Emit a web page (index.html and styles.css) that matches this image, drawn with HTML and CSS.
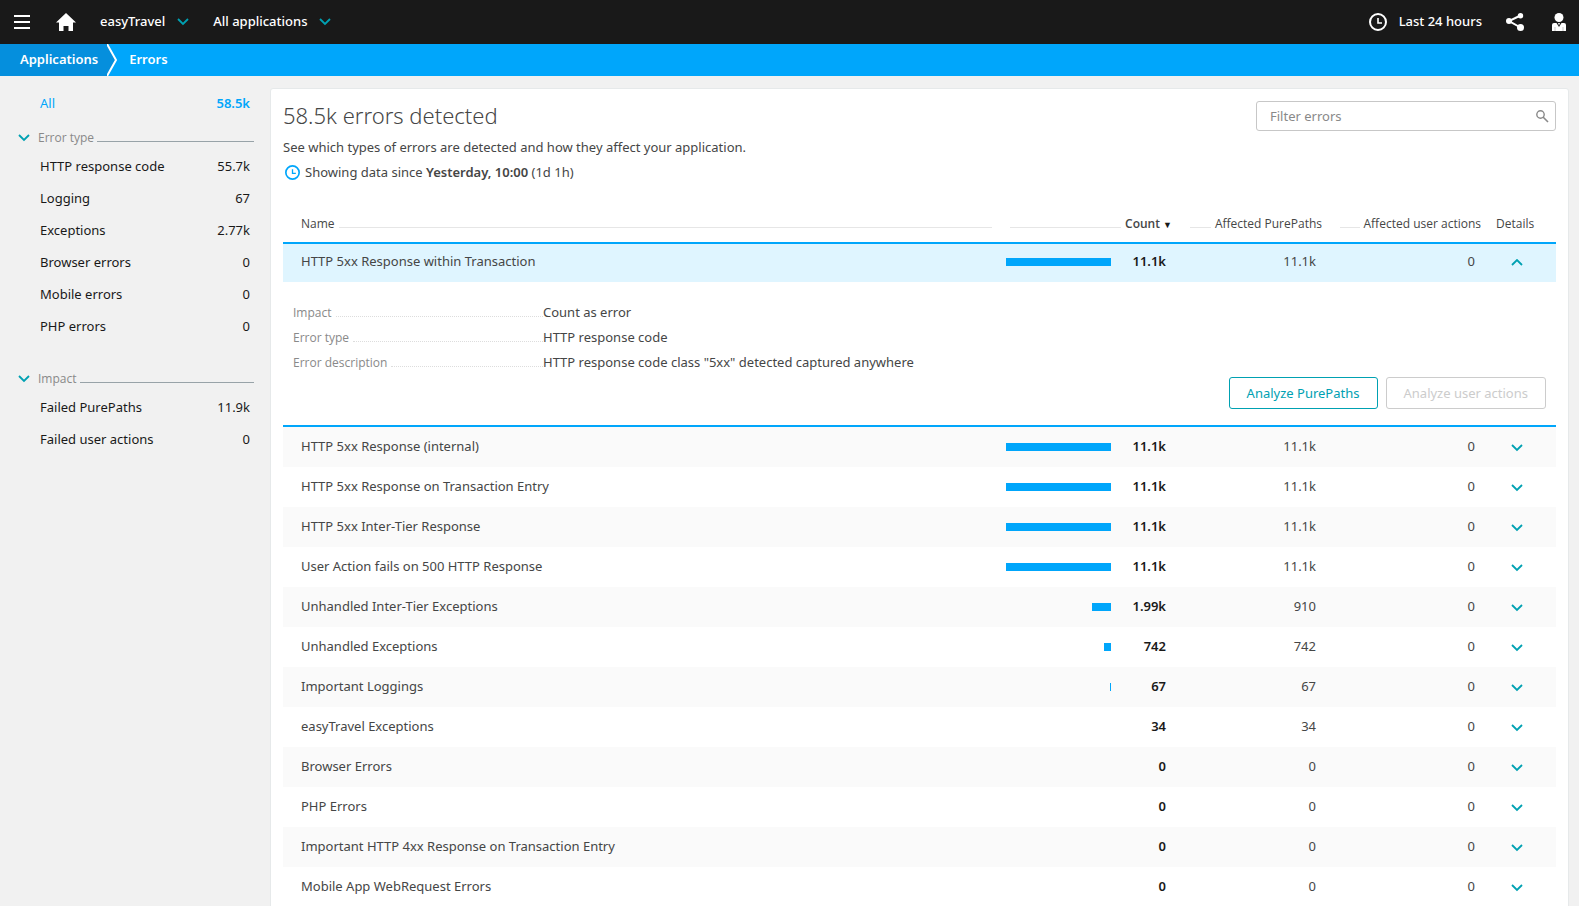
FILE: index.html
```html
<!DOCTYPE html>
<html lang="en">
<head>
    <meta charset="UTF-8">
    <meta name="viewport" content="width=device-width, initial-scale=1.0">
    <title>Errors - easyTravel</title>
    <link rel="stylesheet" href="styles.css">
</head>
<body>
    <!-- Shared icons -->
    <svg class="sprite" aria-hidden="true">
        <symbol id="down" viewBox="0 0 12 8"><path d="M1 1l5 5 5-5" fill="none" stroke="currentColor" stroke-width="1.800"/></symbol>
        <symbol id="up" viewBox="0 0 12 8"><path d="M1 6l5-5 5 5" fill="none" stroke="currentColor" stroke-width="1.800"/></symbol>
        <symbol id="clock" viewBox="0 0 18 18"><circle cx="9" cy="9" r="8" fill="none" stroke="currentColor" stroke-width="2"/><path d="M9 5v5h4" fill="none" stroke="currentColor" stroke-width="1.600"/></symbol>
    </svg>

    <header class="topbar">
        <button class="icon-btn menu-btn" aria-label="Menu">
            <svg width="16" height="14" viewBox="0 0 16 14"><path d="M0 1h16M0 7h16M0 13h16" stroke="currentColor" stroke-width="2"/></svg>
        </button>
        <a class="home" href="#" aria-label="Home">
            <svg width="20" height="18" viewBox="0 0 20 18"><path d="M10 0l10 9.500h-3V18h-4.500v-5h-5v5H3V9.500H0z" fill="currentColor"/></svg>
        </a>
        <button class="picker"><span>easyTravel</span> <svg width="12" height="8"><use href="#down"/></svg></button>
        <button class="picker"><span>All applications</span> <svg width="12" height="8"><use href="#down"/></svg></button>
        <div class="topbar-right">
            <button class="timeframe"><svg width="18" height="18"><use href="#clock"/></svg> <span>Last 24 hours</span></button>
            <button class="icon-btn" aria-label="Share">
                <svg width="18" height="18" viewBox="0 0 18 18"><path d="M14.500 2.500L3 8l11.500 6.500" fill="none" stroke="currentColor" stroke-width="2"/><circle cx="14.500" cy="2.700" r="2.700" fill="currentColor"/><circle cx="3" cy="8" r="3" fill="currentColor"/><circle cx="14.500" cy="14.500" r="3.500" fill="currentColor"/></svg>
            </button>
            <button class="icon-btn" aria-label="User">
                <svg width="14" height="18" viewBox="0 0 14 18"><circle cx="7" cy="4.500" r="4.500" fill="currentColor"/><path d="M0 18v-6q0-2 2-2h2.500l2.500 4 2.500-4h2.500q2 0 2 2v6z" fill="currentColor"/><path d="M6 10h2l-1 2.500z" fill="currentColor"/><path d="M3 14v4M11 14v4" stroke="#888" stroke-width=".5"/></svg>
            </button>
        </div>
    </header>

    <nav class="breadcrumb">
        <a class="crumb crumb-parent" href="#">Applications</a>
        <svg class="crumb-arrow" width="10" height="32" viewBox="0 0 10 32"><path d="M0 0l9 16-9 16z" fill="#058fdd"/><path d="M0 0l9 16-9 16" fill="none" stroke="#fff" stroke-width="2"/></svg>
        <a class="crumb" href="#">Errors</a>
    </nav>

    <div class="content">
        <aside class="sidebar">
            <a class="filter active" href="#">All <span>58.5k</span></a>

            <h2 class="group"><svg width="12" height="8"><use href="#down"/></svg><span>Error type</span></h2>
            <a class="filter" href="#">HTTP response code <span>55.7k</span></a>
            <a class="filter" href="#">Logging <span>67</span></a>
            <a class="filter" href="#">Exceptions <span>2.77k</span></a>
            <a class="filter" href="#">Browser errors <span>0</span></a>
            <a class="filter" href="#">Mobile errors <span>0</span></a>
            <a class="filter" href="#">PHP errors <span>0</span></a>

            <h2 class="group group-next"><svg width="12" height="8"><use href="#down"/></svg><span>Impact</span></h2>
            <a class="filter" href="#">Failed PurePaths <span>11.9k</span></a>
            <a class="filter" href="#">Failed user actions <span>0</span></a>
        </aside>

        <main class="panel">
            <div class="panel-head">
                <div>
                    <h1>58.5k errors detected</h1>
                    <p>See which types of errors are detected and how they affect your application.</p>
                    <p class="since"><svg width="15" height="15"><use href="#clock"/></svg><span>Showing data since <b>Yesterday, 10:00</b> (1d 1h)</span></p>
                </div>
                <div class="search">
                    <input type="text" placeholder="Filter errors" aria-label="Filter errors">
                    <svg width="13" height="13" viewBox="0 0 13 13"><circle cx="4.500" cy="4.500" r="3.700" fill="none" stroke="currentColor" stroke-width="1.400"/><path d="M7 7l5 5" stroke="currentColor" stroke-width="1.600"/></svg>
                </div>
            </div>

            <table class="errors">
                <colgroup>
                    <col>
                    <col class="col-count">
                    <col class="col-paths">
                    <col class="col-actions">
                    <col class="col-details">
                </colgroup>
                <thead>
                    <tr>
                        <th class="name"><div class="th">Name</div></th>
                        <th><div class="th th-right"><button class="sort">Count <span>▼</span></button></div></th>
                        <th><div class="th th-right">Affected PurePaths</div></th>
                        <th><div class="th th-right">Affected user actions</div></th>
                        <th class="th-details">Details</th>
                    </tr>
                </thead>
                <tbody>
                    <tr class="open">
                        <td class="name">HTTP 5xx Response within Transaction</td>
                        <td class="count"><div><span class="track"><i style="width: 100%"></i></span><b>11.1k</b></div></td>
                        <td>11.1k</td>
                        <td>0</td>
                        <td class="toggle"><button aria-label="Collapse"><svg width="12" height="8"><use href="#up"/></svg></button></td>
                    </tr>
                    <tr class="details">
                        <td colspan="5">
                            <dl>
                                <div><dt>Impact</dt><dd>Count as error</dd></div>
                                <div><dt>Error type</dt><dd>HTTP response code</dd></div>
                                <div><dt>Error description</dt><dd>HTTP response code class "5xx" detected captured anywhere</dd></div>
                            </dl>
                            <div class="actions">
                                <button class="btn">Analyze PurePaths</button>
                                <button class="btn" disabled>Analyze user actions</button>
                            </div>
                        </td>
                    </tr>
                    <tr>
                        <td class="name">HTTP 5xx Response (internal)</td>
                        <td class="count"><div><span class="track"><i style="width: 100%"></i></span><b>11.1k</b></div></td>
                        <td>11.1k</td>
                        <td>0</td>
                        <td class="toggle"><button aria-label="Expand"><svg width="12" height="8"><use href="#down"/></svg></button></td>
                    </tr>
                    <tr>
                        <td class="name">HTTP 5xx Response on Transaction Entry</td>
                        <td class="count"><div><span class="track"><i style="width: 100%"></i></span><b>11.1k</b></div></td>
                        <td>11.1k</td>
                        <td>0</td>
                        <td class="toggle"><button aria-label="Expand"><svg width="12" height="8"><use href="#down"/></svg></button></td>
                    </tr>
                    <tr>
                        <td class="name">HTTP 5xx Inter-Tier Response</td>
                        <td class="count"><div><span class="track"><i style="width: 100%"></i></span><b>11.1k</b></div></td>
                        <td>11.1k</td>
                        <td>0</td>
                        <td class="toggle"><button aria-label="Expand"><svg width="12" height="8"><use href="#down"/></svg></button></td>
                    </tr>
                    <tr>
                        <td class="name">User Action fails on 500 HTTP Response</td>
                        <td class="count"><div><span class="track"><i style="width: 100%"></i></span><b>11.1k</b></div></td>
                        <td>11.1k</td>
                        <td>0</td>
                        <td class="toggle"><button aria-label="Expand"><svg width="12" height="8"><use href="#down"/></svg></button></td>
                    </tr>
                    <tr>
                        <td class="name">Unhandled Inter-Tier Exceptions</td>
                        <td class="count"><div><span class="track"><i style="width: 18%"></i></span><b>1.99k</b></div></td>
                        <td>910</td>
                        <td>0</td>
                        <td class="toggle"><button aria-label="Expand"><svg width="12" height="8"><use href="#down"/></svg></button></td>
                    </tr>
                    <tr>
                        <td class="name">Unhandled Exceptions</td>
                        <td class="count"><div><span class="track"><i style="width: 7%"></i></span><b>742</b></div></td>
                        <td>742</td>
                        <td>0</td>
                        <td class="toggle"><button aria-label="Expand"><svg width="12" height="8"><use href="#down"/></svg></button></td>
                    </tr>
                    <tr>
                        <td class="name">Important Loggings</td>
                        <td class="count"><div><span class="track"><i style="width: 1%"></i></span><b>67</b></div></td>
                        <td>67</td>
                        <td>0</td>
                        <td class="toggle"><button aria-label="Expand"><svg width="12" height="8"><use href="#down"/></svg></button></td>
                    </tr>
                    <tr>
                        <td class="name">easyTravel Exceptions</td>
                        <td class="count"><div><b>34</b></div></td>
                        <td>34</td>
                        <td>0</td>
                        <td class="toggle"><button aria-label="Expand"><svg width="12" height="8"><use href="#down"/></svg></button></td>
                    </tr>
                    <tr>
                        <td class="name">Browser Errors</td>
                        <td class="count"><div><b>0</b></div></td>
                        <td>0</td>
                        <td>0</td>
                        <td class="toggle"><button aria-label="Expand"><svg width="12" height="8"><use href="#down"/></svg></button></td>
                    </tr>
                    <tr>
                        <td class="name">PHP Errors</td>
                        <td class="count"><div><b>0</b></div></td>
                        <td>0</td>
                        <td>0</td>
                        <td class="toggle"><button aria-label="Expand"><svg width="12" height="8"><use href="#down"/></svg></button></td>
                    </tr>
                    <tr>
                        <td class="name">Important HTTP 4xx Response on Transaction Entry</td>
                        <td class="count"><div><b>0</b></div></td>
                        <td>0</td>
                        <td>0</td>
                        <td class="toggle"><button aria-label="Expand"><svg width="12" height="8"><use href="#down"/></svg></button></td>
                    </tr>
                    <tr>
                        <td class="name">Mobile App WebRequest Errors</td>
                        <td class="count"><div><b>0</b></div></td>
                        <td>0</td>
                        <td>0</td>
                        <td class="toggle"><button aria-label="Expand"><svg width="12" height="8"><use href="#down"/></svg></button></td>
                    </tr>
                </tbody>
            </table>
        </main>
    </div>
</body>
</html>
```
FILE: styles.css
```css
* {
    box-sizing: border-box;
}

html {
    scrollbar-width: none;
}

body {
    margin: 0;
    min-height: 100vh;
    background-color: #f1f1f1;
    color: #454646;
    font-family: "Noto Sans", "Open Sans", sans-serif;
    font-size: 13px;
    line-height: 20px;
}

h1, h2, p, dl, dd {
    margin: 0;
}

a {
    color: inherit;
    text-decoration: none;
}

button {
    padding: 0;
    border: none;
    background: none;
    color: inherit;
    font: inherit;
    cursor: pointer;
}

svg {
    display: block;
    flex: none;
}

.sprite {
    position: absolute;
    width: 0;
    height: 0;
}

/* Top bar */
.topbar {
    display: flex;
    align-items: center;
    height: 44px;
    padding: 0 13px 0 14px;
    background-color: #191919;
    color: #fff;
    font-weight: 500;
}

.topbar span {
    padding-bottom: 2px;
}

.home {
    margin: 0 24px 0 26px;
}

.picker {
    display: flex;
    align-items: center;
    gap: 12px;
    margin-right: 24px;
}

.picker svg {
    color: #00a1b2;
}

.topbar-right {
    display: flex;
    align-items: center;
    gap: 24px;
    margin-left: auto;
}

.timeframe {
    display: flex;
    align-items: center;
    gap: 12px;
}

.topbar-right .icon-btn:last-child {
    margin-left: 4px;
}

/* Breadcrumb */
.breadcrumb {
    display: flex;
    height: 32px;
    background-color: #00a6fb;
    color: #fff;
    font-weight: 600;
    line-height: 30px;
}

.crumb-parent {
    padding: 0 9px 0 20px;
    background-color: #058fdd;
}

.crumb-arrow {
    margin-right: 12px;
}

/* Filters */
.content {
    display: flex;
    align-items: flex-start;
}

.sidebar {
    flex: none;
    width: 270px;
    padding: 11px 16px 0 18px;
}

.filter {
    display: flex;
    justify-content: space-between;
    padding: 0 4px 0 22px;
    color: #191919;
    line-height: 32px;
}

.filter.active {
    color: #00a6fb;
}

.filter.active span {
    font-weight: 600;
}

.group {
    display: flex;
    align-items: baseline;
    margin-top: 7px;
    color: #898989;
    font-family: "Open Sans", "Noto Sans", sans-serif;
    font-size: 12px;
    font-weight: 400;
    line-height: 24px;
}

.group-next {
    margin-top: 25px;
}

.group svg {
    color: #00a1b2;
}

.group span {
    margin: 0 3px 0 8px;
}

.group::after {
    content: "";
    flex: 1;
    border-bottom: 1px solid #98a3a8;
}

/* Errors panel */
.panel {
    flex: 1;
    min-width: 0;
    margin: 12px 10px 0 0;
    padding: 12px;
    border: 1px solid #e6e9ea;
    border-radius: 3px;
    background-color: #fff;
}

.panel-head {
    display: flex;
    justify-content: space-between;
    align-items: flex-start;
}

h1 {
    font-size: 22px;
    font-weight: 300;
    line-height: 28px;
}

.panel-head p {
    margin-top: 8px;
}

.panel-head .since {
    display: flex;
    align-items: center;
    gap: 5px;
    margin-top: 5px;
    padding-left: 2px;
}

.since svg {
    color: #00a6fb;
}

.since b {
    font-weight: 600;
}

.search {
    display: flex;
    align-items: center;
    width: 300px;
    height: 30px;
    padding-right: 6px;
    border: 1px solid #c7c7c7;
    border-radius: 3px;
    color: #898989;
}

.search input {
    flex: 1;
    min-width: 0;
    padding: 0 13px;
    border: none;
    outline: none;
    background: none;
    font: inherit;
}

.search input::placeholder {
    color: #898989;
}

/* Errors table */
.errors {
    width: 100%;
    margin-top: 24px;
    border-collapse: separate;
    border-spacing: 0;
    table-layout: fixed;
}

.col-count {
    width: 180px;
}

.col-paths {
    width: 150px;
}

.col-actions {
    width: 159px;
}

.col-details {
    width: 66px;
}

.errors th {
    height: 36px;
    padding: 0 9px;
    font-family: "Open Sans", "Noto Sans", sans-serif;
    font-size: 12px;
    font-weight: 400;
    white-space: nowrap;
}

.errors th.th-details {
    padding: 0 6px;
    text-align: left;
}

.th {
    display: flex;
    align-items: baseline;
    gap: 4px;
}

.th::after,
.th-right::before {
    content: "";
    flex: 1;
    border-bottom: 1px solid #e6e6e6;
}

.th-right::after {
    display: none;
}

.sort {
    font-weight: 600;
}

.sort span {
    color: #191919;
    font-size: 9px;
}

.errors td {
    height: 40px;
    padding: 0 15px 2px;
    text-align: right;
}

.errors th.name,
.errors td.name {
    padding-left: 18px;
    text-align: left;
}

.errors tbody tr:nth-child(odd) td {
    background-color: #fafafa;
}

.errors tbody tr.open td {
    background-color: #dff5ff;
    box-shadow: inset 0 2px #00a6fb;
}

.errors td.count {
    padding: 0 15px 0 5px;
}

.count div {
    display: flex;
    align-items: center;
    justify-content: flex-end;
}

.track {
    display: flex;
    flex: 1;
    justify-content: flex-end;
}

.track i {
    height: 8px;
    background-color: #00a6fb;
}

.count b {
    width: 55px;
    padding-bottom: 2px;
    color: #191919;
    font-weight: 600;
}

.errors td.toggle {
    padding: 0 33px 0 0;
}

.toggle button {
    padding: 4px 0;
    color: #00a1b2;
}

/* Expanded row */
.errors .details td {
    padding: 18px 10px 16px;
    border-bottom: 2px solid #00a6fb;
    text-align: left;
}

.details dl div {
    display: flex;
    line-height: 25px;
}

.details dt {
    display: flex;
    align-items: baseline;
    gap: 4px;
    width: 250px;
    color: #898989;
    font-family: "Open Sans", "Noto Sans", sans-serif;
    font-size: 12px;
}

.details dt::after {
    content: "";
    flex: 1;
    border-bottom: 1px dotted #dddddd;
}

.actions {
    display: flex;
    justify-content: flex-end;
    gap: 8px;
    margin-top: 2px;
}

.btn {
    height: 32px;
    padding: 0 17px;
    border: 1px solid #00a1b2;
    border-radius: 3px;
    color: #00a1b2;
}

.btn:disabled {
    border-color: #cccccc;
    color: #cccccc;
    cursor: default;
}
```
